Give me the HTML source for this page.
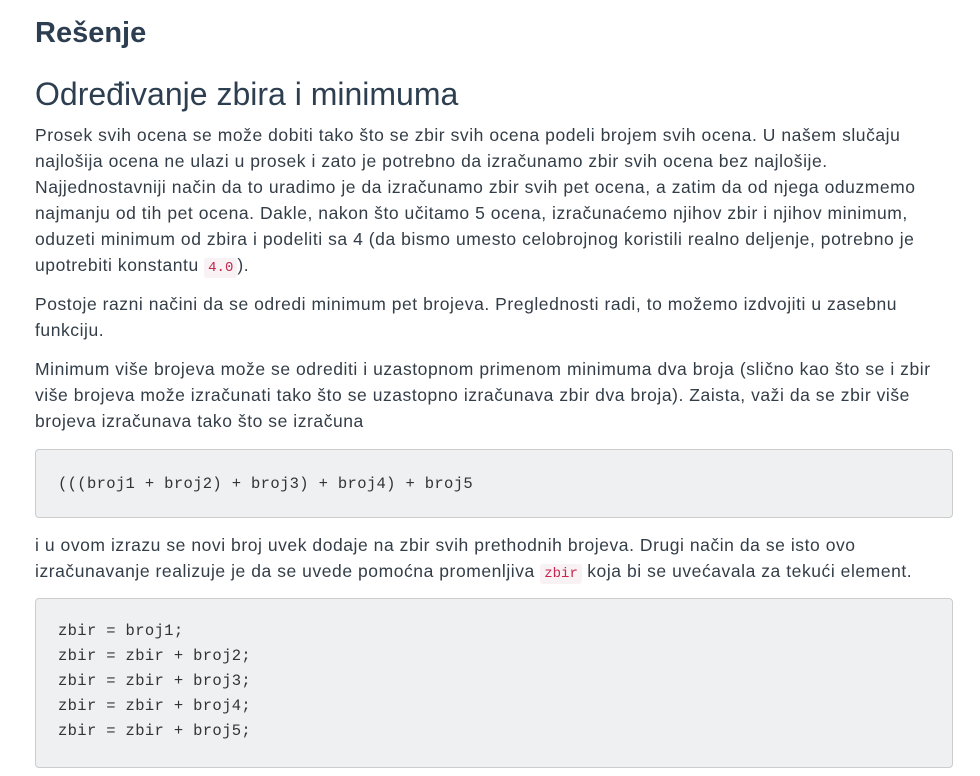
<!DOCTYPE html>
<html><head><meta charset="utf-8"><style>
body{margin:0;background:#fff;color:#34495e;font-family:"Liberation Sans",sans-serif;}
h3{position:absolute;left:35px;top:14px;margin:0;font-size:29px;font-weight:bold;color:#2c3e50;line-height:38px;}
h2{position:absolute;left:35px;top:73px;margin:0;font-size:32px;font-weight:normal;color:#2c3e50;line-height:42px;}
p{position:absolute;left:35px;margin:0;font-size:17.5px;letter-spacing:0.55px;line-height:26px;white-space:nowrap;color:#333d47;}
code{font-family:"Liberation Mono",monospace;font-size:14px;letter-spacing:0;color:#c7254e;background:#f9f2f4;padding:2px 4px;border-radius:3px;}
pre{position:absolute;left:35px;width:894px;margin:0;background:#eff0f1;border:1px solid #ccc;border-radius:4px;padding:0 0 0 22px;font-family:"Liberation Mono",monospace;font-size:15.5px;letter-spacing:0.35px;color:#333;line-height:25px;}
</style></head><body>
<h3>Rešenje</h3>
<h2>Određivanje zbira i minimuma</h2>
<p style="top:122px">Prosek svih ocena se može dobiti tako što se zbir svih ocena podeli brojem svih ocena. U našem slučaju<br>najlošija ocena ne ulazi u prosek i zato je potrebno da izračunamo zbir svih ocena bez najlošije.<br>Najjednostavniji način da to uradimo je da izračunamo zbir svih pet ocena, a zatim da od njega oduzmemo<br>najmanju od tih pet ocena. Dakle, nakon što učitamo 5 ocena, izračunaćemo njihov zbir i njihov minimum,<br>oduzeti minimum od zbira i podeliti sa 4 (da bismo umesto celobrojnog koristili realno deljenje, potrebno je<br>upotrebiti konstantu <code>4.0</code>).</p>
<p style="top:291px">Postoje razni načini da se odredi minimum pet brojeva. Preglednosti radi, to možemo izdvojiti u zasebnu<br>funkciju.</p>
<p style="top:356px">Minimum više brojeva može se odrediti i uzastopnom primenom minimuma dva broja (slično kao što se i zbir<br>više brojeva može izračunati tako što se uzastopno izračunava zbir dva broja). Zaista, važi da se zbir više<br>brojeva izračunava tako što se izračuna</p>
<pre style="top:449px;padding-top:22px;height:45px">(((broj1 + broj2) + broj3) + broj4) + broj5</pre>
<p style="top:532px">i u ovom izrazu se novi broj uvek dodaje na zbir svih prethodnih brojeva. Drugi način da se isto ovo<br>izračunavanje realizuje je da se uvede pomoćna promenljiva <code>zbir</code> koja bi se uvećavala za tekući element.</p>
<pre style="top:598px;padding-top:20px;height:148px">zbir = broj1;
zbir = zbir + broj2;
zbir = zbir + broj3;
zbir = zbir + broj4;
zbir = zbir + broj5;</pre>
</body></html>
